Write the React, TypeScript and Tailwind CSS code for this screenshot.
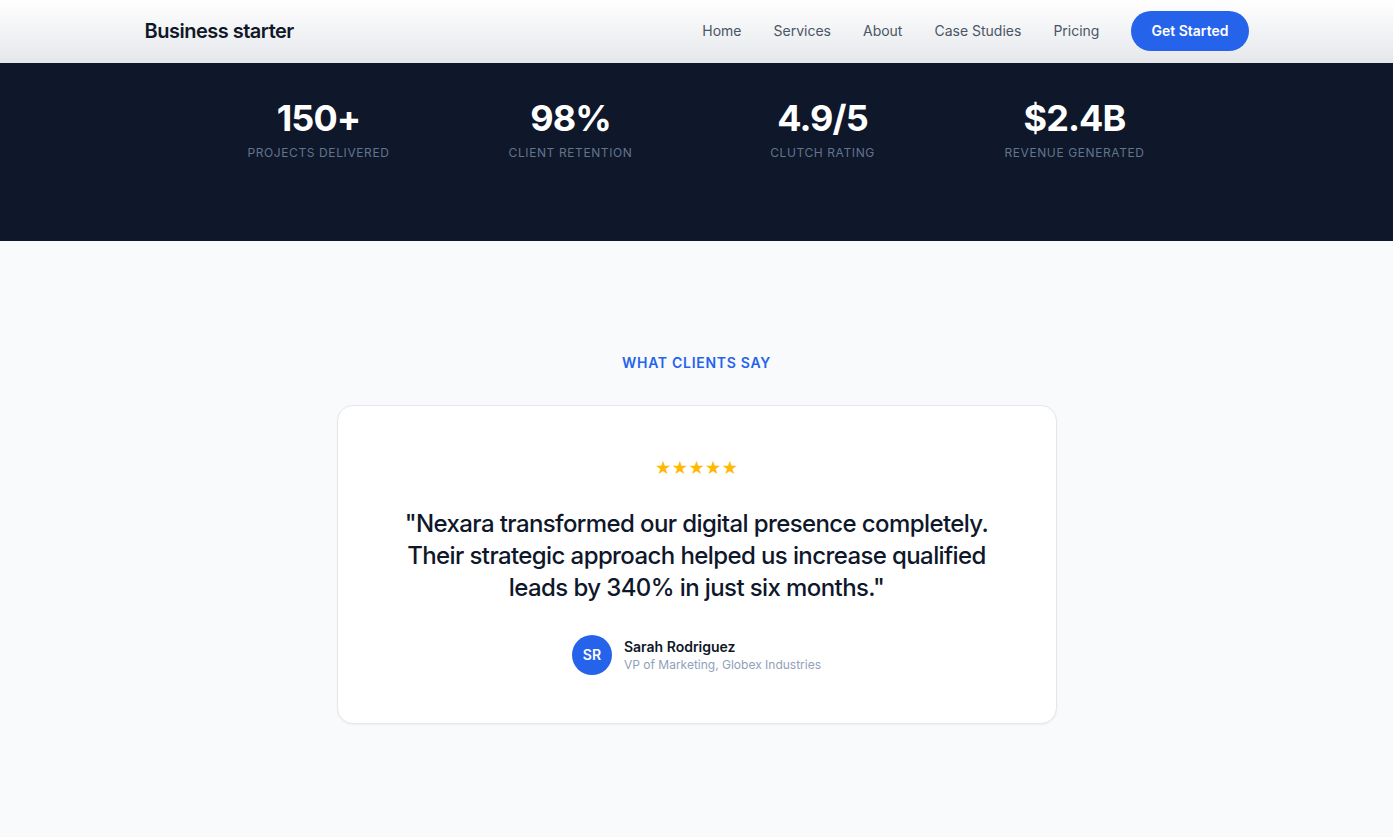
import React from "react";

const navLinks = ["Home", "Services", "About", "Case Studies", "Pricing"];

const stats = [
  { value: "150+", label: "Projects Delivered" },
  { value: "98%", label: "Client Retention" },
  { value: "4.9/5", label: "Clutch Rating" },
  { value: "$2.4B", label: "Revenue Generated" },
];

export default function App() {
  return (
    <div className="min-h-screen bg-slate-50 font-['Inter',sans-serif]">
      {/* Navbar */}
      <header className="h-[63px] bg-linear-to-b from-white to-gray-200">
        <div className="max-w-6xl mx-auto px-6 pb-[2px] h-full flex items-center justify-between">
          <span className="text-xl font-semibold tracking-tight text-gray-900">
            Business starter
          </span>
          <nav className="flex items-center gap-8">
            {navLinks.map((link) => (
              <a key={link} href="#" className="text-sm text-gray-600 hover:text-gray-900">
                {link}
              </a>
            ))}
            <a
              href="#"
              className="h-10 px-5 flex items-center rounded-full bg-[#2563eb] text-white text-sm font-semibold"
            >
              Get Started
            </a>
          </nav>
        </div>
      </header>

      {/* Stats */}
      <section className="h-[178px] bg-[#0f172a] pt-[32px]">
        <div className="w-[1008px] mx-auto grid grid-cols-4">
          {stats.map((stat) => (
            <div key={stat.label} className="flex flex-col items-center">
              <span className="text-4xl leading-[46px] font-bold tracking-tight text-white">
                {stat.value}
              </span>
              <span className="mt-1 text-xs uppercase tracking-wider text-slate-500">
                {stat.label}
              </span>
            </div>
          ))}
        </div>
      </section>

      {/* Testimonial */}
      <section className="py-28">
        <p className="text-center text-sm font-semibold tracking-wider text-[#2563eb] uppercase">
          What clients say
        </p>
        <div className="mt-8 mx-auto w-[720px] rounded-2xl border border-gray-200 bg-white p-12 shadow-xs flex flex-col items-center">
          <div className="text-base leading-7 text-amber-400">★★★★★</div>
          <blockquote className="mt-[26px] text-center text-2xl leading-8 font-medium tracking-tight text-slate-900">
            "Nexara transformed our digital presence completely. Their strategic approach helped us
            increase qualified leads by 340% in just six months."
          </blockquote>
          <div className="mt-[31px] flex items-center gap-3">
            <div className="w-10 h-10 rounded-full bg-[#2563eb] flex items-center justify-center text-white text-sm font-semibold">
              SR
            </div>
            <div className="flex flex-col">
              <span className="text-sm font-semibold text-gray-900">Sarah Rodriguez</span>
              <span className="text-xs text-slate-400">VP of Marketing, Globex Industries</span>
            </div>
          </div>
        </div>
      </section>
    </div>
  );
}
